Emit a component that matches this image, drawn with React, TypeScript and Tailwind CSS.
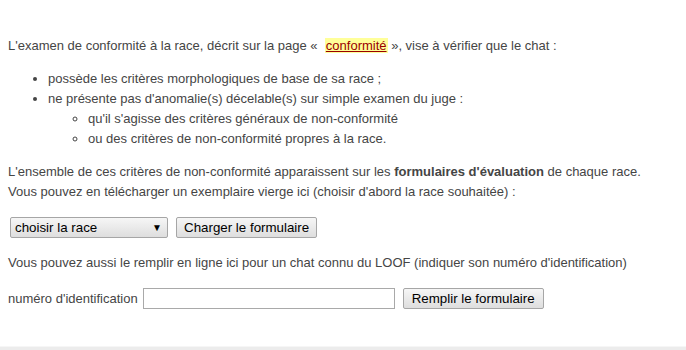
import React from "react";

const btn =
  "h-[21px] px-[7px] border border-[#a6a6a6] rounded-[2px] bg-gradient-to-b from-[#f6f6f6] to-[#dedede] text-black text-[13.33px] leading-[19px] flex items-center";

export default function App() {
  return (
    <div
      className="w-[686px] h-[350px] bg-white flex flex-col text-[#454545] text-[13px] leading-[20px]"
      style={{ fontFamily: '"Liberation Sans", Arial, sans-serif' }}
    >
      <div className="flex-1 pl-[8px] pt-[36px]">
        <p>
          L'examen de conformité à la race, décrit sur la page «&nbsp;{" "}
          <span className="bg-[#ffff99] text-[#990000] underline px-[1px]">conformité</span> », vise à vérifier que le chat :
        </p>
        <ul className="mt-[13px] pl-[40px] list-disc">
          <li>possède les critères morphologiques de base de sa race ;</li>
          <li>
            ne présente pas d'anomalie(s) décelable(s) sur simple examen du juge :
            <ul className="pl-[40px] list-[circle]">
              <li>qu'il s'agisse des critères généraux de non-conformité</li>
              <li>ou des critères de non-conformité propres à la race.</li>
            </ul>
          </li>
        </ul>
        <p className="mt-[13px] leading-[19.5px]">
          L'ensemble de ces critères de non-conformité apparaissent sur les{" "}
          <b className="font-bold">formulaires d'évaluation</b> de chaque race.
          <br />
          Vous pouvez en télécharger un exemplaire vierge ici (choisir d'abord la race souhaitée) :
        </p>
        <div className="mt-[16px] flex items-center pl-[2px] gap-[8px]">
          <div className="w-[158px] h-[21px] border border-[#a6a6a6] rounded-[2px] bg-gradient-to-b from-[#f6f6f6] to-[#dedede] text-black text-[13.33px] flex items-center justify-between pl-[4px] pr-[5px]">
            <span className="leading-[19px]">choisir la race</span>
            <span className="text-[10px] leading-none">▼</span>
          </div>
          <div className={btn}>Charger le formulaire</div>
        </div>
        <p className="mt-[15px]">
          Vous pouvez aussi le remplir en ligne ici pour un chat connu du LOOF (indiquer son numéro d'identification)
        </p>
        <div className="mt-[15px] flex items-center">
          <span>numéro d'identification</span>
          <div className="ml-[5px] w-[252px] h-[21px] border border-[#a9a9a9] bg-white" />
          <div className={btn + " ml-[8px] px-[8px]"}>Remplir le formulaire</div>
        </div>
      </div>
      <div className="h-[1px] bg-[#f6f6f6]" />
      <div className="h-[3px] bg-[#ececec]" />
    </div>
  );
}
